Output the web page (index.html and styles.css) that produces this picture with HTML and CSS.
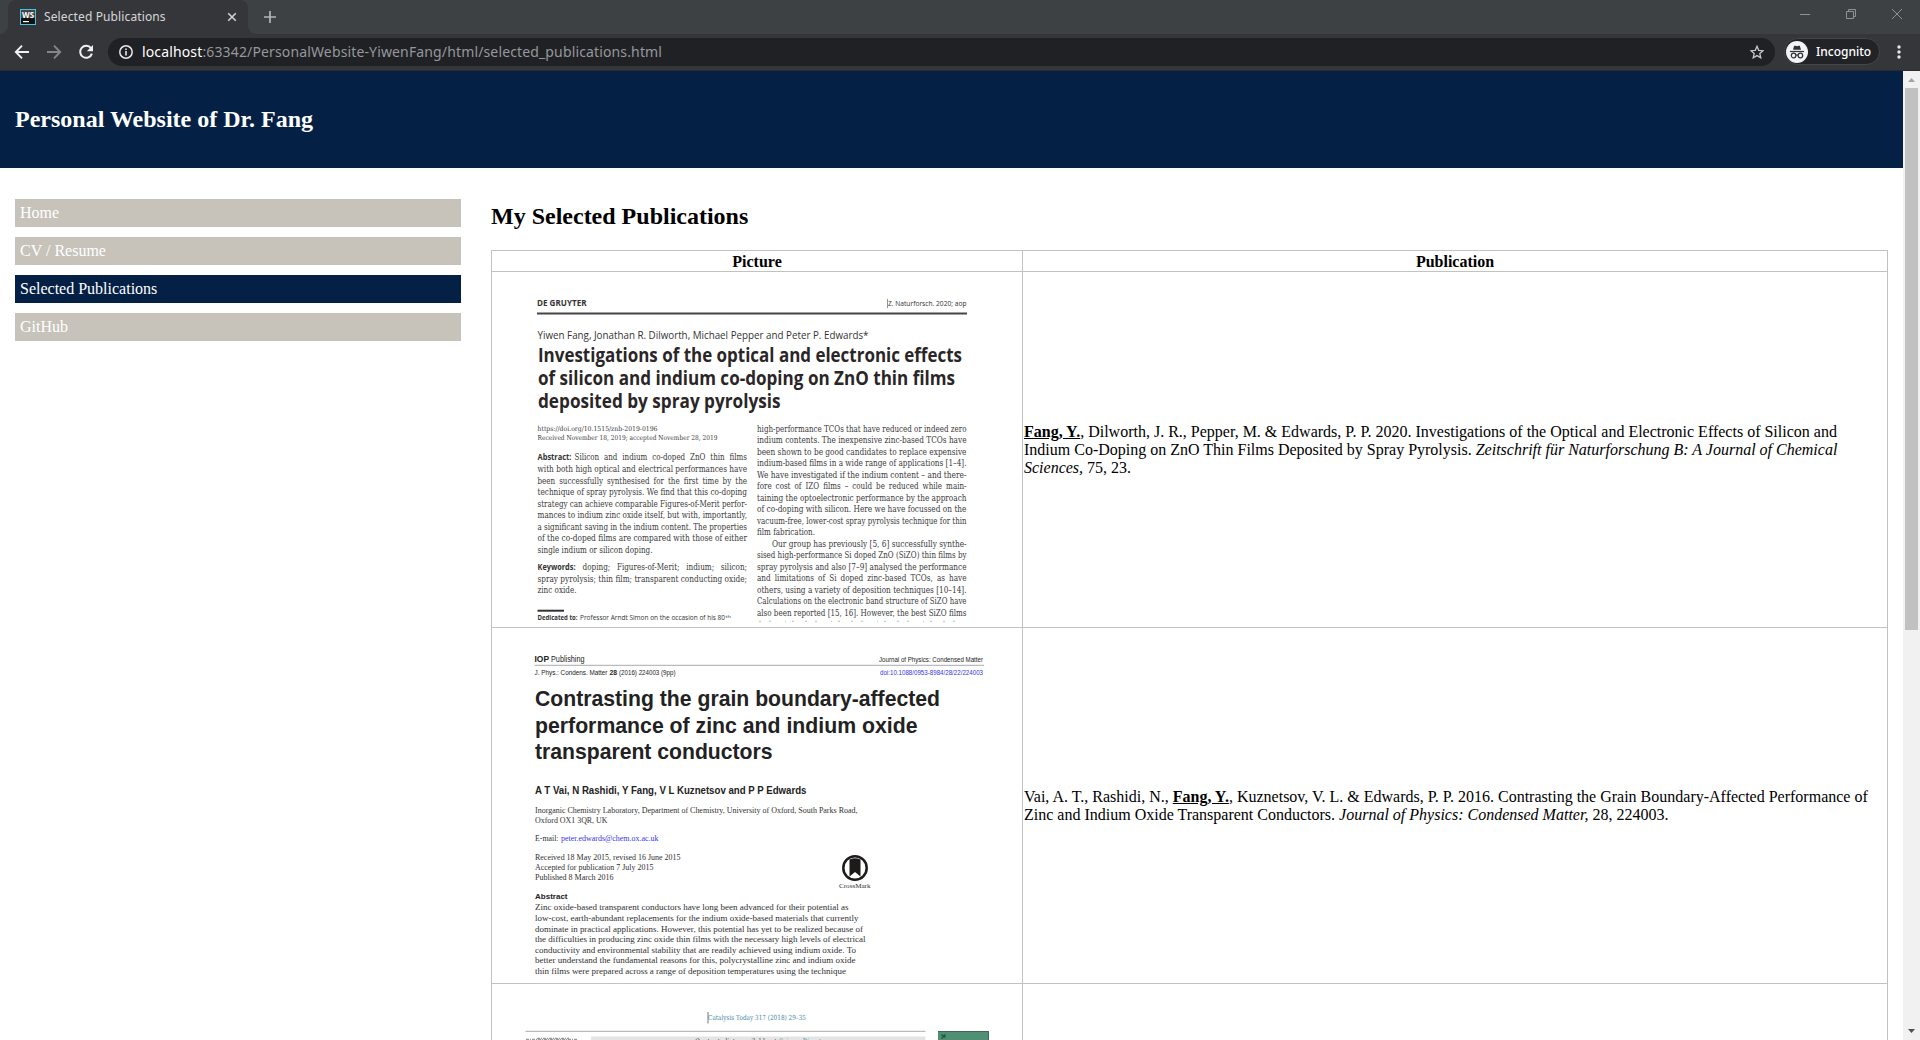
FILE: index.html
```html
<!DOCTYPE html>
<html lang="en">
<head>
<meta charset="utf-8">
<title>Selected Publications</title>
<link rel="stylesheet" href="styles.css">
</head>
<body>
<div class="window">
  <div class="tabstrip">
    <div class="tab">
      <svg class="favicon" width="16" height="16" viewBox="0 0 16 16"><rect width="16" height="16" fill="#45c1ee"/><rect x="1" y="1" width="14" height="14" fill="#111"/><rect x="1" y="1" width="14" height="8" fill="#444"/><rect x="3" y="12" width="6" height="1.2" fill="#fff"/><text x="2" y="9" font-size="8.5" font-weight="700" fill="#fff" textLength="12" lengthAdjust="spacingAndGlyphs">WS</text></svg>
      <span class="tab-title">Selected Publications</span>
      <svg width="10" height="10" viewBox="0 0 10 10"><path d="M1.2 1.2l7.6 7.6M8.8 1.2L1.2 8.8" stroke="#d0d1d3" stroke-width="1.6"/></svg>
    </div>
    <svg class="new-tab" width="12" height="12" viewBox="0 0 12 12"><path d="M6 0v12M0 6h12" stroke="#b4b6b8" stroke-width="1.7"/></svg>
    <div class="controls">
      <svg width="10" height="10" viewBox="0 0 10 10"><path d="M0 5.5h10" stroke="#8f9294"/></svg>
      <svg width="10" height="10" viewBox="0 0 10 10" fill="none" stroke="#8f9294"><path d="M.5 2.5h7v7h-7zM2.5 2.500V.5h7v7h-2"/></svg>
      <svg width="10" height="10" viewBox="0 0 10 10"><path d="M0 0l10 10M10 0L0 10" stroke="#8f9294"/></svg>
    </div>
  </div>
  <div class="toolbar">
    <svg width="16" height="16" viewBox="0 0 16 16" fill="none" stroke="#f1f1f2" stroke-width="1.9"><path d="M15 8H2M8 1.700L1.800 8L8 14.300"/></svg>
    <svg width="16" height="16" viewBox="0 0 16 16" fill="none" stroke="#85868a" stroke-width="1.900"><path d="M1 8h13M8 1.700L14.200 8L8 14.300"/></svg>
    <svg width="16" height="16" viewBox="0 0 16 16"><path d="M13 4.200A6 6 0 1 0 13.900 9.600" fill="none" stroke="#f1f1f2" stroke-width="2"/><path d="M15 1v6.200H8.800z" fill="#f1f1f2"/></svg>
    <div class="omnibox">
      <svg width="14" height="14" viewBox="0 0 14 14"><circle cx="7" cy="7" r="6.200" fill="none" stroke="#e8eaed" stroke-width="1.500"/><path d="M7 6v4.600M7 3.400v1.600" stroke="#e8eaed" stroke-width="1.600"/></svg>
      <span class="url"><b>localhost</b>:63342/PersonalWebsite-YiwenFang/html/selected_publications.html</span>
      <svg width="14" height="14" viewBox="0 0 14 14"><path d="M7 1.300l1.700 4 4.400.4-3.300 2.900 1 4.200L7 10.600l-3.800 2.200 1-4.200L.9 5.700l4.400-.4z" fill="none" stroke="#c6c8cb" stroke-width="1.300"/></svg>
    </div>
    <div class="chip">
      <svg width="22" height="22" viewBox="0 0 22 22"><circle cx="11" cy="11" r="11" fill="#f1f3f4"/><path d="M7 8.800l1.200-4h1.300l1.500.5 1.500-.5h1.300l1.200 4z" fill="#303134"/><path d="M4 10.500h14" stroke="#303134" stroke-width="1.200"/><g fill="none" stroke="#303134" stroke-width="1.200"><circle cx="7.600" cy="14.500" r="2.300"/><circle cx="14.400" cy="14.500" r="2.300"/><path d="M9.900 14.200q1.100-.6 2.200 0"/></g></svg>
      <span>Incognito</span>
    </div>
    <svg class="menu" width="4" height="14" viewBox="0 0 4 14" fill="#e8e8e9"><circle cx="2" cy="2" r="1.700"/><circle cx="2" cy="7" r="1.700"/><circle cx="2" cy="12" r="1.700"/></svg>
  </div>
  <div class="viewport">
    <div class="page">
      <header class="banner"><h1>Personal Website of Dr. Fang</h1></header>
      <div class="columns">
        <nav class="side">
          <a>Home</a>
          <a>CV / Resume</a>
          <a class="current">Selected Publications</a>
          <a>GitHub</a>
        </nav>
        <main class="content">
          <h2>My Selected Publications</h2>
          <table class="pubs">
            <tr><th class="pic-col">Picture</th><th>Publication</th></tr>
            <tr>
              <td>
<svg class="scan" viewBox="493 273 529 353">
<g class="meta">
<text class="strong" x="537" y="306" font-size="8" textLength="49.500" lengthAdjust="spacingAndGlyphs">DE GRUYTER</text>
<text x="888" y="306" font-size="7.200" textLength="78.500" lengthAdjust="spacingAndGlyphs">Z. Naturforsch. 2020; aop</text>
<text x="537.500" y="339" font-size="10.400" textLength="331" lengthAdjust="spacingAndGlyphs">Yiwen Fang, Jonathan R. Dilworth, Michael Pepper and Peter P. Edwards*</text>
</g>
<path d="M887.500 299v9" stroke="#777" stroke-width=".8"/>
<path d="M537 313.500h430" stroke="#444" stroke-width="2"/>
<g class="headline">
<text x="538" y="361.500" textLength="424" lengthAdjust="spacingAndGlyphs">Investigations of the optical and electronic effects</text>
<text x="538" y="385" textLength="417" lengthAdjust="spacingAndGlyphs">of silicon and indium co-doping on ZnO thin films</text>
<text x="538" y="408.300" textLength="242.500" lengthAdjust="spacingAndGlyphs">deposited by spray pyrolysis</text>
</g>
<g class="slab">
<text x="537.500" y="430.500" font-size="6.800" textLength="120" lengthAdjust="spacingAndGlyphs">https://doi.org/10.1515/znb-2019-0196</text>
<text x="537.500" y="440.300" font-size="6.800" textLength="180" lengthAdjust="spacingAndGlyphs">Received November 18, 2019; accepted November 28, 2019</text>
<text class="strong" x="537.500" y="460.300" textLength="34" lengthAdjust="spacingAndGlyphs">Abstract:</text>
<text x="574.500" y="460.300" word-spacing="3" textLength="172.500" lengthAdjust="spacingAndGlyphs">Silicon and indium co-doped ZnO thin films</text>
<text x="537.500" y="471.900" textLength="209.500" lengthAdjust="spacingAndGlyphs">with both high optical and electrical performances have</text>
<text x="537.500" y="483.500" word-spacing="2" textLength="209.500" lengthAdjust="spacingAndGlyphs">been successfully synthesised for the first time by the</text>
<text x="537.500" y="495.100" textLength="209.500" lengthAdjust="spacingAndGlyphs">technique of spray pyrolysis. We find that this co-doping</text>
<text x="537.500" y="506.700" textLength="209.500" lengthAdjust="spacingAndGlyphs">strategy can achieve comparable Figures-of-Merit perfor-</text>
<text x="537.500" y="518.300" textLength="209.500" lengthAdjust="spacingAndGlyphs">mances to indium zinc oxide itself, but with, importantly,</text>
<text x="537.500" y="529.800" textLength="209.500" lengthAdjust="spacingAndGlyphs">a significant saving in the indium content. The properties</text>
<text x="537.500" y="541.300" textLength="209.500" lengthAdjust="spacingAndGlyphs">of the co-doped films are compared with those of either</text>
<text x="537.500" y="552.900" textLength="115" lengthAdjust="spacingAndGlyphs">single indium or silicon doping.</text>
<text class="strong" x="537.500" y="570" textLength="38" lengthAdjust="spacingAndGlyphs">Keywords:</text>
<text x="582.500" y="570" word-spacing="5" textLength="164.500" lengthAdjust="spacingAndGlyphs">doping; Figures-of-Merit; indium; silicon;</text>
<text x="537.500" y="581.600" textLength="209.500" lengthAdjust="spacingAndGlyphs">spray pyrolysis; thin film; transparent conducting oxide;</text>
<text x="537.500" y="593.200" textLength="39" lengthAdjust="spacingAndGlyphs">zinc oxide.</text>
<text x="757" y="431.500" textLength="209.500" lengthAdjust="spacingAndGlyphs">high-performance TCOs that have reduced or indeed zero</text>
<text x="757" y="443" textLength="209.500" lengthAdjust="spacingAndGlyphs">indium contents. The inexpensive zinc-based TCOs have</text>
<text x="757" y="454.600" textLength="209.500" lengthAdjust="spacingAndGlyphs">been shown to be good candidates to replace expensive</text>
<text x="757" y="466.100" textLength="209.500" lengthAdjust="spacingAndGlyphs">indium-based films in a wide range of applications [1–4].</text>
<text x="757" y="477.600" textLength="209.500" lengthAdjust="spacingAndGlyphs">We have investigated if the indium content – and there-</text>
<text x="757" y="489.100" word-spacing="2" textLength="209.500" lengthAdjust="spacingAndGlyphs">fore cost of IZO films – could be reduced while main-</text>
<text x="757" y="500.700" textLength="209.500" lengthAdjust="spacingAndGlyphs">taining the optoelectronic performance by the approach</text>
<text x="757" y="512.200" textLength="209.500" lengthAdjust="spacingAndGlyphs">of co-doping with silicon. Here we have focussed on the</text>
<text x="757" y="523.700" textLength="209.500" lengthAdjust="spacingAndGlyphs">vacuum-free, lower-cost spray pyrolysis technique for thin</text>
<text x="757" y="535.200" textLength="58" lengthAdjust="spacingAndGlyphs">film fabrication.</text>
<text x="772" y="546.800" textLength="194.500" lengthAdjust="spacingAndGlyphs">Our group has previously [5, 6] successfully synthe-</text>
<text x="757" y="558.300" textLength="209.500" lengthAdjust="spacingAndGlyphs">sised high-performance Si doped ZnO (SiZO) thin films by</text>
<text x="757" y="569.800" textLength="209.500" lengthAdjust="spacingAndGlyphs">spray pyrolysis and also [7–9] analysed the performance</text>
<text x="757" y="581.300" word-spacing="2" textLength="209.500" lengthAdjust="spacingAndGlyphs">and limitations of Si doped zinc-based TCOs, as have</text>
<text x="757" y="592.900" textLength="209.500" lengthAdjust="spacingAndGlyphs">others, using a variety of deposition techniques [10–14].</text>
<text x="757" y="604.400" textLength="209.500" lengthAdjust="spacingAndGlyphs">Calculations on the electronic band structure of SiZO have</text>
<text x="757" y="615.900" textLength="209.500" lengthAdjust="spacingAndGlyphs">also been reported [15, 16]. However, the best SiZO films</text>
</g>
<path d="M537.500 610.700h26.500" stroke="#333" stroke-width="2"/>
<path d="M759 621.300h206" stroke="#aaa" stroke-width=".8" stroke-dasharray="2 8 2 14 1 6 2 11"/>
<g class="meta">
<text class="strong" x="537.500" y="620" font-size="6.600" textLength="40" lengthAdjust="spacingAndGlyphs">Dedicated to:</text>
<text x="580" y="620" font-size="6.600" textLength="145" lengthAdjust="spacingAndGlyphs">Professor Arndt Simon on the occasion of his 80</text>
<text x="725.500" y="617.500" font-size="4" textLength="5.500" lengthAdjust="spacingAndGlyphs">th</text>
</g>
</svg>
              </td>
              <td><b><u>Fang, Y.</u></b>, Dilworth, J. R., Pepper, M. &amp; Edwards, P. P. 2020. Investigations of the Optical and Electronic Effects of Silicon and Indium Co-Doping on ZnO Thin Films Deposited by Spray Pyrolysis. <i>Zeitschrift für Naturforschung B: A Journal of Chemical Sciences,</i> 75, 23.</td>
            </tr>
            <tr>
              <td>
<svg class="scan" viewBox="493 629 529 353">
<g class="sans">
<text class="strong" x="534.500" y="662" font-size="9.500" textLength="14.500" lengthAdjust="spacingAndGlyphs">IOP</text>
<text x="551" y="662" font-size="9.500" textLength="33.500" lengthAdjust="spacingAndGlyphs">Publishing</text>
<text x="879" y="661.500" font-size="7" textLength="104" lengthAdjust="spacingAndGlyphs">Journal of Physics: Condensed Matter</text>
<text x="534.500" y="674.700" font-size="6.600" textLength="73" lengthAdjust="spacingAndGlyphs">J. Phys.: Condens. Matter</text>
<text class="strong" x="609.500" y="674.700" font-size="6.600" textLength="7.500" lengthAdjust="spacingAndGlyphs">28</text>
<text x="619" y="674.700" font-size="6.600" textLength="56.500" lengthAdjust="spacingAndGlyphs">(2016) 224003 (9pp)</text>
<text class="link" x="880" y="675" font-size="6.600" textLength="103" lengthAdjust="spacingAndGlyphs">doi:10.1088/0953-8984/28/22/224003</text>
<g class="strong" font-size="21.500">
<text x="535" y="706.300" textLength="405" lengthAdjust="spacingAndGlyphs">Contrasting the grain boundary-affected</text>
<text x="535" y="732.700" textLength="382.500" lengthAdjust="spacingAndGlyphs">performance of zinc and indium oxide</text>
<text x="535" y="759.300" textLength="237.500" lengthAdjust="spacingAndGlyphs">transparent conductors</text>
</g>
<text class="strong" x="535" y="794.300" font-size="10.200" textLength="271.500" lengthAdjust="spacingAndGlyphs">A T Vai, N Rashidi, Y Fang, V L Kuznetsov and P P Edwards</text>
<text class="strong" x="535" y="899" font-size="8" textLength="32.500" lengthAdjust="spacingAndGlyphs">Abstract</text>
</g>
<path d="M534.500 665.300h449.500" stroke="#aaa"/>
<g class="serif">
<text x="535" y="812.700" textLength="322.500" lengthAdjust="spacingAndGlyphs">Inorganic Chemistry Laboratory, Department of Chemistry, University of Oxford, South Parks Road,</text>
<text x="535" y="822.700" textLength="72.500" lengthAdjust="spacingAndGlyphs">Oxford OX1 3QR, UK</text>
<text x="535" y="841.300" textLength="23.500" lengthAdjust="spacingAndGlyphs">E-mail:</text>
<text class="link" x="561" y="841.300" textLength="97.500" lengthAdjust="spacingAndGlyphs">peter.edwards@chem.ox.ac.uk</text>
<text x="535" y="859.700" textLength="145.500" lengthAdjust="spacingAndGlyphs">Received 18 May 2015, revised 16 June 2015</text>
<text x="535" y="869.700" textLength="118.500" lengthAdjust="spacingAndGlyphs">Accepted for publication 7 July 2015</text>
<text x="535" y="879.700" textLength="78.500" lengthAdjust="spacingAndGlyphs">Published 8 March 2016</text>
<text x="839" y="887.700" font-size="7" textLength="31.500" lengthAdjust="spacingAndGlyphs">CrossMark</text>
<g font-size="9.200">
<text x="535" y="910.300" textLength="313.500" lengthAdjust="spacingAndGlyphs">Zinc oxide-based transparent conductors have long been advanced for their potential as</text>
<text x="535" y="920.900" textLength="323.500" lengthAdjust="spacingAndGlyphs">low-cost, earth-abundant replacements for the indium oxide-based materials that currently</text>
<text x="535" y="931.500" textLength="328" lengthAdjust="spacingAndGlyphs">dominate in practical applications. However, this potential has yet to be realized because of</text>
<text x="535" y="942.100" textLength="330.500" lengthAdjust="spacingAndGlyphs">the difficulties in producing zinc oxide thin films with the necessary high levels of electrical</text>
<text x="535" y="952.700" textLength="321" lengthAdjust="spacingAndGlyphs">conductivity and environmental stability that are readily achieved using indium oxide. To</text>
<text x="535" y="963.300" textLength="320.500" lengthAdjust="spacingAndGlyphs">better understand the fundamental reasons for this, polycrystalline zinc and indium oxide</text>
<text x="535" y="973.900" textLength="311" lengthAdjust="spacingAndGlyphs">thin films were prepared across a range of deposition temperatures using the technique</text>
</g>
</g>
<circle cx="855" cy="868" r="11.700" fill="#fff" stroke="#1d1a1a" stroke-width="2.500"/>
<path d="M849.500 859.500q5.500-2.500 11 0v17l-5.500-4.500-5.500 4.500z" fill="#1d1a1a"/>
</svg>
              </td>
              <td>Vai, A. T., Rashidi, N., <b><u>Fang, Y.</u></b>, Kuznetsov, V. L. &amp; Edwards, P. P. 2016. Contrasting the Grain Boundary-Affected Performance of Zinc and Indium Oxide Transparent Conductors. <i>Journal of Physics: Condensed Matter,</i> 28, 224003.</td>
            </tr>
            <tr>
              <td>
<svg class="scan" viewBox="493 985 529 353">
<path d="M708 1012v11.500" stroke="#777"/>
<path d="M525.500 1031.300h400" stroke="#aaa"/>
<rect x="591" y="1036.500" width="334.500" height="30" fill="#e4e4e4"/>
<rect x="938" y="1031" width="51" height="66" fill="#4f8f74"/>
<path d="M938 1031.500h50.500v66" fill="none" stroke="#3f6655"/>
<path d="M941.500 1034.500l4 3m0-3l-4 4" stroke="#274c3d" stroke-width="1.200"/>
<path d="M526 1039.500h51M537 1038.500h32" stroke="#999" stroke-width="1.500" stroke-dasharray="3 1 1 1"/>
<g class="slab">
<text class="teal" x="708" y="1020.300" font-size="7" textLength="98" lengthAdjust="spacingAndGlyphs">Catalysis Today 317 (2018) 29–35</text>
<text x="695" y="1043.500" font-size="7.500" textLength="82" lengthAdjust="spacingAndGlyphs">Contents lists available at</text>
<text class="teal" x="779" y="1043.500" font-size="7.500" textLength="42.500" lengthAdjust="spacingAndGlyphs">ScienceDirect</text>
</g>
</svg>
              </td>
              <td></td>
            </tr>
          </table>
        </main>
      </div>
    </div>
    <div class="scrollbar">
      <svg width="17" height="17" viewBox="0 0 17 17"><path d="M5 11l3.500-4 3.500 4z" fill="#a3a3a3"/></svg>
      <div class="thumb"></div>
      <svg class="down" width="17" height="17" viewBox="0 0 17 17"><path d="M5 6h7l-3.500 4z" fill="#505050"/></svg>
    </div>
  </div>
</div>
</body>
</html>
```
FILE: styles.css
```css
* { box-sizing: border-box; }
body { margin: 0; overflow: hidden; font: 16px/18px "Liberation Serif", "Times New Roman", serif; color: #000; background: #fff; }
svg { display: block; flex: none; }

.window { display: flex; flex-direction: column; height: 1040px; overflow: hidden; }
.tabstrip, .toolbar { font-family: "Noto Sans", sans-serif; display: flex; align-items: center; flex: none; }
.tabstrip { height: 34px; padding: 0 18px 0 8px; background: #3d4144; }
.tab { position: relative; display: flex; align-items: center; width: 240px; height: 34px; padding: 0 11px 0 12px; background: #35363a; border-radius: 8px 8px 0 0; }
.tab::before, .tab::after { content: ""; position: absolute; bottom: 0; width: 8px; height: 8px; }
.tab::before { left: -8px; background: radial-gradient(circle at 0 0, transparent 7.5px, #35363a 8px); }
.tab::after { right: -8px; background: radial-gradient(circle at 100% 0, transparent 7.5px, #35363a 8px); }
.tab-title { flex: 1; padding-left: 8px; font-size: 12px; letter-spacing: .12px; color: #d5d6d8; white-space: nowrap; }
.new-tab { margin-left: 16px; }
.controls { display: flex; gap: 36px; margin-left: auto; margin-top: -6px; }

.toolbar { height: 37px; padding: 0 19px 1px 14px; gap: 16px; background: #35363a; border-bottom: 1px solid #2b2c2f; }
.omnibox { flex: 1; display: flex; align-items: center; height: 28px; padding: 0 11px; margin: 0 -7px 0 -2px; border-radius: 14px; background: #202124; }
.url { flex: 1; padding-left: 9px; font-size: 14px; letter-spacing: .14px; color: #95989c; white-space: nowrap; }
.url b { font-weight: 400; color: #fff; }
.chip { display: flex; align-items: center; gap: 8px; width: 96px; height: 27px; padding-left: 1px; border: 1px solid #45464a; border-radius: 14px; background: #222327; color: #fff; font-size: 12px; font-weight: 500; }
.menu { margin-left: 1px; }

.viewport { display: flex; flex: 1; min-height: 0; }
.page { flex: 1; min-width: 0; overflow: hidden; }
.banner { display: flex; align-items: center; height: 97px; padding: 0 15px; background: #042145; color: #fff; }
h1, h2 { margin: 0; font-size: 24px; line-height: 27px; }
.columns { display: grid; grid-template-columns: 476px 1fr; }
.side { display: flex; flex-direction: column; gap: 10px; padding: 31px 15px; }
.side a { height: 28px; padding: 5px; background: #c7c3bb; color: #fff; }
.side .current { background: #042145; }
.content { padding: 35px 15px; }
.content h2 { margin-bottom: 20px; }

.pubs { width: 1397px; border-collapse: collapse; table-layout: fixed; }
.pubs th, .pubs td { border: 1px solid #c3c3be; padding: 1px; vertical-align: middle; }
.pubs th { padding: 1px 1px; line-height: 18px; }
.pubs tr:first-child th { height: 21px; }
.pubs th { padding-bottom: 0; }
.pic-col { width: 531px; }
.scan { width: 529px; height: 353px; }
.meta { font-family: "Open Sans", sans-serif; fill: #333; }
.headline { font: 700 19px "Open Sans", sans-serif; fill: #2a2627; }
.slab { font: 8.300px "DejaVu Serif", serif; fill: #3a3a3a; }
.sans { font-family: "Liberation Sans", sans-serif; fill: #222; }
.serif { font-size: 8.800px; fill: #303030; }
.strong { font-weight: 700; }
.slab .strong { font-family: "Open Sans", sans-serif; fill: #333; }
.link { fill: #3434f0; }
.teal { fill: #4687a6; }

.scrollbar { display: flex; flex-direction: column; align-items: center; width: 17px; background: #f1f1f1; }
.thumb { width: 13px; height: 542px; background: #c1c1c1; }
.down { margin-top: auto; }
```
